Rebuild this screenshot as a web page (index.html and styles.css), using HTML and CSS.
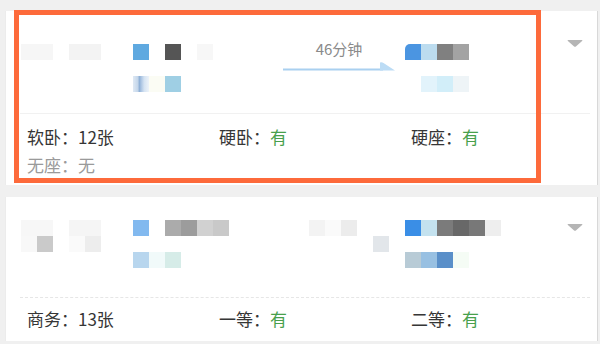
FILE: index.html
```html
<!DOCTYPE html>
<html lang="zh-CN">
<head>
<meta charset="utf-8">
<title>车次列表</title>
<link rel="stylesheet" href="styles.css">
</head>
<body>
<div class="list">
  <section class="card card-a">
    <div class="trip">
      <i class="px r1 x2" style="--c:#f6f6f6"></i><i class="px r1 x3" style="--c:#f6f6f6"></i>
      <i class="px r1 x5" style="--c:#f3f3f3"></i><i class="px r1 x6" style="--c:#f3f3f3"></i>
      <i class="px r1 x9" style="--c:#5fa9e0"></i>
      <i class="px r1 x11" style="--c:#555555"></i>
      <i class="px r1 x13" style="--c:#f7f7f7"></i>
      <i class="px r1 x26 round" style="--c:#4b95e1"></i>
      <i class="px r1 x27" style="--c:#bcdcef"></i>
      <i class="px r1 x28" style="--c:#808080"></i>
      <i class="px r1 x29" style="--c:#a3a3a3"></i>
      <i class="px r3 x9 smear"></i>
      <i class="px r3 x10" style="--c:#fbfcf4"></i>
      <i class="px r3 x11" style="--c:#9fcfe4"></i>
      <i class="px r3 x27" style="--c:#e2f3fb"></i>
      <i class="px r3 x28" style="--c:#d2eef9"></i>
      <i class="px r3 x29" style="--c:#eef4f7"></i>
      <span class="dur">46分钟</span>
      <svg class="arrow" viewBox="0 0 112 10" aria-hidden="true"><path d="M0 8.5H100" fill="none" stroke="#a9d0f0" stroke-width="2"/><path d="M97 1.5Q99 1 100.5 2L112 9.5H97Z" fill="#bcdcf5"/></svg>
      <svg class="caret" viewBox="0 0 16 7" aria-hidden="true"><path d="M1.2 0H14.8Q16 0 15.1 0.9L8.9 6.4Q8 7.2 7.1 6.4L0.9 0.9Q0 0 1.2 0Z" fill="#b5b5b5"/></svg>
    </div>
    <div class="rule"></div>
    <div class="seats">
      <span>软卧<span class="colon">：</span>12张</span>
      <span>硬卧<span class="colon">：</span><b class="ok">有</b></span>
      <span>硬座<span class="colon">：</span><b class="ok">有</b></span>
      <span class="none">无座<span class="colon">：</span>无</span>
    </div>
  </section>

  <section class="card card-b">
    <div class="trip">
      <i class="px r1 x2" style="--c:#f7f7f7"></i><i class="px r1 x3" style="--c:#f7f7f7"></i>
      <i class="px r1 x5" style="--c:#f5f5f5"></i><i class="px r1 x6" style="--c:#f5f5f5"></i>
      <i class="px r1 x9" style="--c:#82b9ef"></i>
      <i class="px r1 x11" style="--c:#ababab"></i>
      <i class="px r1 x12" style="--c:#9c9c9c"></i>
      <i class="px r1 x13" style="--c:#d1d1d1"></i>
      <i class="px r1 x14" style="--c:#c9c9c9"></i>
      <i class="px r1 x20" style="--c:#f3f3f3"></i>
      <i class="px r1 x21" style="--c:#fafafa"></i>
      <i class="px r1 x22" style="--c:#ececec"></i>
      <i class="px r1 x26" style="--c:#3a8ee6"></i>
      <i class="px r1 x27" style="--c:#c4e2ef"></i>
      <i class="px r1 x28" style="--c:#7b7b7b"></i>
      <i class="px r1 x29" style="--c:#686868"></i>
      <i class="px r1 x30" style="--c:#787878"></i>
      <i class="px r1 x31" style="--c:#eeeeee"></i>
      <i class="px r2 x2" style="--c:#f8f8f8"></i>
      <i class="px r2 x3" style="--c:#cacaca"></i>
      <i class="px r2 x5" style="--c:#fafafa"></i>
      <i class="px r2 x6" style="--c:#ededed"></i>
      <i class="px r2 x24" style="--c:#e2e6ea"></i>
      <i class="px r3 x9" style="--c:#b8d6ee"></i>
      <i class="px r3 x10" style="--c:#f1fafa"></i>
      <i class="px r3 x11" style="--c:#d6ece8"></i>
      <i class="px r3 x26" style="--c:#b8cbd6"></i>
      <i class="px r3 x27" style="--c:#98c0e2"></i>
      <i class="px r3 x28" style="--c:#5a8fc9"></i>
      <i class="px r3 x29" style="--c:#f5fcf5"></i>
      <svg class="caret" viewBox="0 0 16 7" aria-hidden="true"><path d="M1.2 0H14.8Q16 0 15.1 0.9L8.9 6.4Q8 7.2 7.1 6.4L0.9 0.9Q0 0 1.2 0Z" fill="#b5b5b5"/></svg>
    </div>
    <div class="rule"></div>
    <div class="seats">
      <span>商务<span class="colon">：</span>13张</span>
      <span>一等<span class="colon">：</span><b class="ok">有</b></span>
      <span>二等<span class="colon">：</span><b class="ok">有</b></span>
    </div>
  </section>
</div>
<div class="mark"></div>
</body>
</html>
```

FILE: styles.css
```css
* { box-sizing: border-box; margin: 0; padding: 0; }
html, body { width: 600px; height: 344px; overflow: hidden; }
body {
  background: #f0f0f0;
  padding-top: 11px;
  position: relative;
  font-family: "Noto Sans CJK SC", "Noto Sans", sans-serif;
}
.list { display: flex; flex-direction: column; gap: 12px; }
.card {
  background: #fff;
  margin-left: 5px;
  width: 593px;
  box-shadow: inset 1px 0 #ececec, inset -1px 0 #d8d8d8;
}
.trip {
  display: grid;
  grid-template-columns: repeat(37, 16px);
  grid-template-rows: repeat(3, 16px);
}
.card-a .trip { padding-top: 33px; }
.card-b .trip { padding-top: 23px; }

.px { display: block; background: var(--c); }
.round { border-top-left-radius: 5px; }
.smear { background: linear-gradient(90deg, #dfe9f4 0%, #c4d6ea 30%, #8fb0d6 40%, #a9c3e2 50%, #d5e3f2 70%, #edf3f9 100%); }
.r1 { grid-row: 1; }
.r2 { grid-row: 2; }
.r3 { grid-row: 3; }
.x2 { grid-column: 2; } .x3 { grid-column: 3; } .x5 { grid-column: 5; } .x6 { grid-column: 6; }
.x9 { grid-column: 9; } .x10 { grid-column: 10; } .x11 { grid-column: 11; } .x12 { grid-column: 12; }
.x13 { grid-column: 13; } .x14 { grid-column: 14; } .x20 { grid-column: 20; } .x21 { grid-column: 21; }
.x22 { grid-column: 22; } .x24 { grid-column: 24; } .x26 { grid-column: 26; } .x27 { grid-column: 27; }
.x28 { grid-column: 28; } .x29 { grid-column: 29; } .x30 { grid-column: 30; } .x31 { grid-column: 31; }

.dur {
  grid-row: 1;
  grid-column: 18 / 26;
  margin: -3px 10px 0 6px;
  text-align: center;
  font-size: 15px;
  line-height: 16px;
  color: #8a8a8a;
}
.arrow {
  grid-row: 2;
  grid-column: 18 / 26;
  margin: 1px 10px 0 6px;
  width: 112px;
  height: 10px;
}
.caret {
  grid-row: 1;
  grid-column: 36 / 38;
  width: 16px;
  height: 7px;
  margin-left: 2px;
}
.card-a .caret { margin-top: -4px; }
.card-b .caret { margin-top: 4px; }

.rule { margin: 21px 8px 0 15px; border-top: 1px solid #f1f1f1; }
.card-b .rule { margin-top: 29px; border-top: 1px dashed #e6e6e6; }

.seats {
  display: grid;
  grid-template-columns: repeat(3, 192px);
  padding: 9px 0 6px 22px;
  font-size: 17px;
  line-height: 28px;
  color: #363636;
}
.card-b .seats { padding: 7px 0 8px 22px; }
.colon { font-family: "Noto Sans CJK JP", "Noto Sans CJK SC", sans-serif; }
.ok { color: #48a04c; font-weight: normal; }
.none { color: #9a9a9a; }

.mark {
  position: absolute;
  left: 14px;
  top: 10px;
  width: 527px;
  height: 173px;
  border: 5px solid #fd6a3b;
}
```
